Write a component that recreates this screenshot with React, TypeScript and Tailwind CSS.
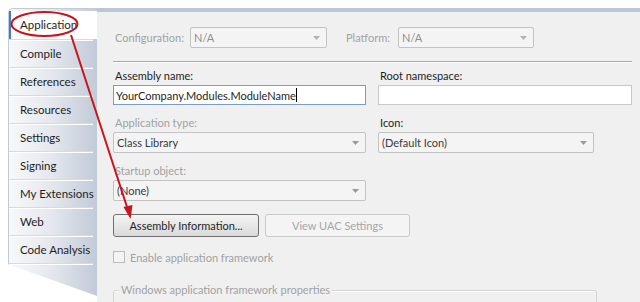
import * as React from 'react'

// Project properties page: "Application" tab of a VS-style designer,
// with a red hand-drawn callout pointing at the Assembly Information button.

const tabs = [
  'Application',
  'Compile',
  'References',
  'Resources',
  'Settings',
  'Signing',
  'My Extensions',
  'Web',
  'Code Analysis',
]

function Arrow({ disabled }: { disabled?: boolean }) {
  return (
    <svg width="7" height="4" viewBox="0 0 7 4" className="shrink-0">
      <path d="M0 0h7L3.5 4z" fill={disabled ? '#b4b4b4' : '#9a9a9a'} />
    </svg>
  )
}

function Select({ value, className, muted }: { value: string; className: string; muted?: boolean }) {
  return (
    <div
      className={`h-[21px] flex items-center justify-between pl-[3px] pr-[6px] rounded-[2px] border border-[#c3c3c3] bg-[#f4f4f4] ${className}`}
    >
      <span className={muted ? 'text-[#8f8f8f]' : 'text-[#3a3a3a]'}>{value}</span>
      <Arrow disabled={muted} />
    </div>
  )
}

function Label({ children, muted }: { children: React.ReactNode; muted?: boolean }) {
  return (
    <div className={`h-[19px] leading-[19px] pl-[2px] ${muted ? 'text-[#a2a2a2]' : 'text-[#1e1e1e]'}`}>
      {children}
    </div>
  )
}

export default function App() {
  return (
    <div
      className="relative w-[640px] h-[302px] overflow-hidden bg-white flex pt-2 pl-2 text-[11px] leading-none whitespace-nowrap"
      style={{ fontFamily: 'Lato, "Noto Sans", sans-serif' }}
    >
      {/* left tab strip */}
      <aside className="relative w-[89px] h-[288px] shrink-0 rounded-tl-[5px] border-l border-t border-[#c4cad3] bg-gradient-to-r from-[#f7f8fa] via-[#e3e7ed] to-[#c1cad7] [clip-path:polygon(0_0,100%_0,100%_100%,0_89%)]">
        <div className="pt-[2px] text-[11.5px]">
          {tabs.map((t, i) => (
            <div
              key={t}
              className={
                i === 0
                  ? 'h-[28px] flex items-center pl-[9px] bg-white border-l-2 border-[#3d7fd6] text-[#1e1e1e]'
                  : 'h-[28px] flex items-center pl-[11px] text-[#1e1e1e] border-t border-[#d6dbe3] shadow-[inset_0_1px_0_#ffffff] mr-[4px]'
              }
            >
              {t}
            </div>
          ))}
          <div className="h-px mr-[4px] bg-[#d6dbe3] shadow-[0_1px_0_#ffffff]" />
        </div>
      </aside>

      {/* page body */}
      <main className="flex-1 h-full bg-[#f0f0f0] border-t-4 border-[#bcc7d4] pl-4 pr-2 text-[#1e1e1e]">
        <div className="flex items-center pt-[15px] h-[36px]">
          <span className="w-[77px] pl-[2px] text-[#a2a2a2]">Configuration:</span>
          <Select value="N/A" className="w-[137px]" muted />
          <span className="ml-[19px] w-[52px] text-[#a2a2a2]">Platform:</span>
          <Select value="N/A" className="w-[136px]" muted />
        </div>

        <div className="mt-[13px] h-px bg-[#a9a9a9] shadow-[0_1px_0_#ffffff]" />

        <div className="flex gap-3 mt-[4px]">
          <div className="w-[253px]">
            <Label>Assembly name:</Label>
            <div className="h-[20px] flex items-center pl-[2px] bg-white border border-[#7a9cc9]">
              YourCompany.Modules.ModuleName
              <span className="w-px h-[14px] bg-black" />
            </div>
          </div>
          <div className="w-[254px]">
            <Label>Root namespace:</Label>
            <div className="h-[20px] bg-white border border-[#c8c8c8]" />
          </div>
        </div>

        <div className="flex gap-3 mt-[8px]">
          <div className="w-[253px]">
            <Label muted>Application type:</Label>
            <Select value="Class Library" className="w-[253px]" />
          </div>
          <div>
            <Label>Icon:</Label>
            <Select value="(Default Icon)" className="w-[216px]" />
          </div>
        </div>

        <div className="mt-[8px] w-[253px]">
          <Label muted>Startup object:</Label>
          <Select value="(None)" className="w-[253px]" />
        </div>

        <div className="flex gap-[6px] mt-[13px]">
          <button className="w-[146px] h-[23px] rounded-[3px] border border-[#707070] bg-gradient-to-b from-[#f4f4f4] to-[#dadada] text-[#1e1e1e]">
            Assembly Information...
          </button>
          <button className="w-[145px] h-[23px] rounded-[3px] border border-[#c9c9c9] bg-[#f4f4f4] text-[#a6a6a6]">
            View UAC Settings
          </button>
        </div>

        <div className="flex items-center gap-[5px] mt-[14px]">
          <span className="w-[12px] h-[12px] border border-[#bcbcbc] bg-[#f4f4f4]" />
          <span className="text-[#a2a2a2]">Enable application framework</span>
        </div>

        <div className="relative mt-[27px] w-[484px] h-[20px] border-t border-r border-l border-[#d5d5d5] shadow-[inset_0_1px_0_#ffffff] rounded-t-[3px]">
          <span className="absolute -top-[7px] left-[5px] px-[2px] bg-[#f0f0f0] text-[#a2a2a2]">
            Windows application framework properties
          </span>
        </div>
      </main>

      {/* red callout */}
      <svg className="absolute inset-0 pointer-events-none" width="640" height="302" viewBox="0 0 640 302">
        <ellipse cx="44.5" cy="24" rx="33" ry="12" fill="none" stroke="#c8151d" strokeWidth="2" />
        <line x1="71" y1="35" x2="128" y2="210" stroke="#c8151d" strokeWidth="2" />
        <path d="M130.5 219 L123.5 207 L132.5 205 Z" fill="#c8151d" />
      </svg>
    </div>
  )
}
